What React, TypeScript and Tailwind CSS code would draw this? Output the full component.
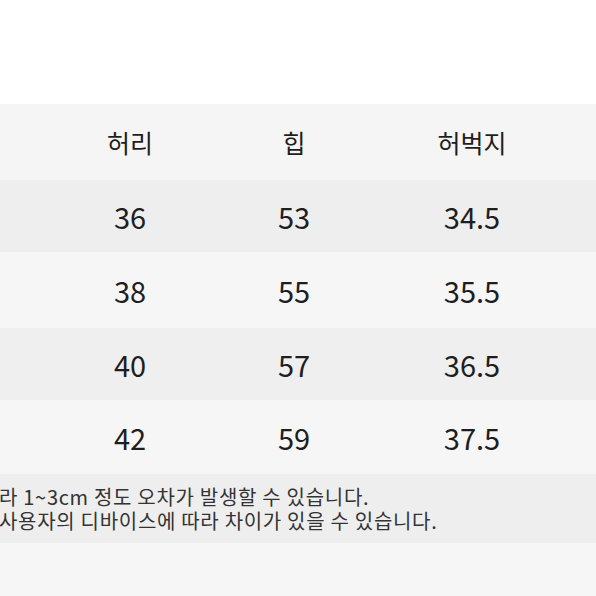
import React from "react";

const rows = [
  { w: "36", h: "53", t: "34.5", bg: "bg-[#eeeeee]", ht: "h-[72px]" },
  { w: "38", h: "55", t: "35.5", bg: "bg-[#f6f6f6]", ht: "h-[76px]" },
  { w: "40", h: "57", t: "36.5", bg: "bg-[#efefef]", ht: "h-[72px]" },
  { w: "42", h: "59", t: "37.5", bg: "bg-[#f6f6f6]", ht: "h-[74px]" },
];

export default function App() {
  return (
    <div
      className="w-[596px] h-[596px] overflow-hidden bg-[#f6f6f6] flex flex-col text-[#1e1e1e]"
      style={{ fontFamily: '"Noto Sans CJK KR", "Noto Sans", sans-serif' }}
    >
      <div className="h-[104px] bg-white shrink-0" />
      <div className="h-[76px] shrink-0 bg-[#f5f5f5] flex items-center pl-[50px] text-[25px] leading-none">
        <div className="w-[160px] text-center">허리</div>
        <div className="w-[168px] text-center">힙</div>
        <div className="w-[188px] text-center">허벅지</div>
      </div>
      {rows.map((r) => (
        <div
          key={r.w}
          className={`${r.ht} ${r.bg} shrink-0 flex items-center pl-[50px] text-[29px] leading-none`}
        >
          <div className="w-[160px] text-center">{r.w}</div>
          <div className="w-[168px] text-center">{r.h}</div>
          <div className="w-[188px] text-center">{r.t}</div>
        </div>
      ))}
      <div className="h-[69px] shrink-0 bg-[#eeeeee] flex flex-col justify-center gap-[3px] text-[20px] leading-[21px] tracking-[0.7px] text-[#333333] whitespace-nowrap -ml-[1px]">
        <div>라 1~3cm 정도 오차가 발생할 수 있습니다.</div>
        <div>사용자의 디바이스에 따라 차이가 있을 수 있습니다.</div>
      </div>
      <div className="flex-1 bg-[#f6f6f6]" />
    </div>
  );
}
